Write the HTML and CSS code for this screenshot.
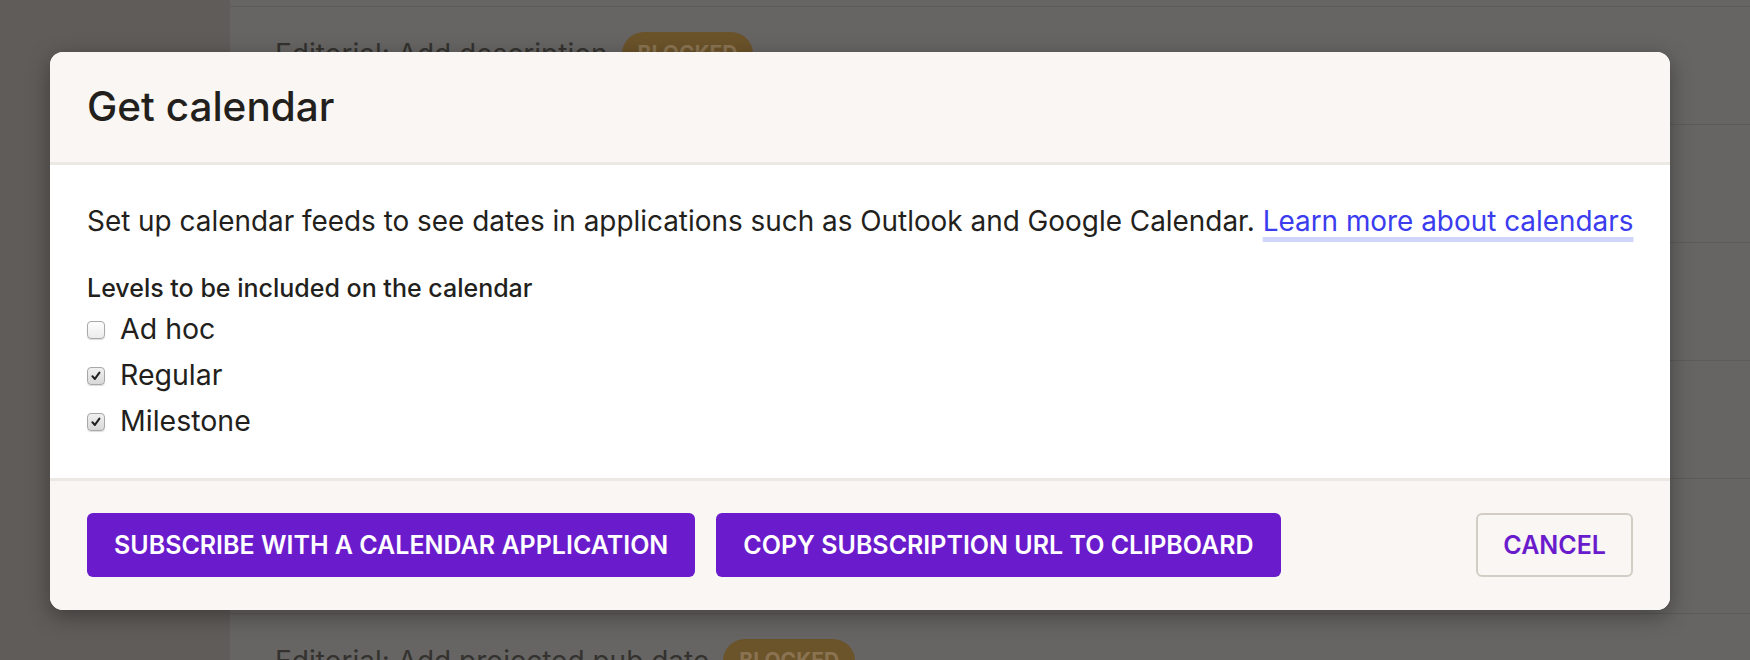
FILE: index.html
```html
<!DOCTYPE html>
<html lang="en">
<head>
  <meta charset="UTF-8">
  <title>Get calendar</title>
  <link rel="stylesheet" href="styles.css">
</head>
<body>

  <div class="app">
    <aside class="sidebar"></aside>
    <main class="main">
      <div class="list">
        <div class="task"></div>
        <div class="task">
          <span class="task-name">Editorial: Add description</span>
          <span class="badge">BLOCKED</span>
        </div>
        <div class="task"></div>
        <div class="task"></div>
        <div class="task"></div>
        <div class="task tall"></div>
        <div class="task">
          <span class="task-name">Editorial: Add projected pub date</span>
          <span class="badge">BLOCKED</span>
        </div>
      </div>
    </main>
  </div>

  <div class="modal">
    <div class="modal-header">
      <h1>Get calendar</h1>
    </div>

    <div class="modal-body">
      <p class="intro">Set up calendar feeds to see dates in applications such as Outlook and Google Calendar. <a href="#">Learn more about calendars</a></p>

      <div class="levels-title">Levels to be included on the calendar</div>

      <label class="check">
        <span class="box"></span>
        Ad hoc
      </label>
      <label class="check">
        <span class="box checked">
          <svg viewBox="0 0 18 18" width="18" height="18"><path d="M4.4 9.4 L7.6 12.8 L13.4 4.6" fill="none" stroke="#222" stroke-width="2.6" stroke-linecap="round" stroke-linejoin="round"/></svg>
        </span>
        Regular
      </label>
      <label class="check">
        <span class="box checked">
          <svg viewBox="0 0 18 18" width="18" height="18"><path d="M4.4 9.4 L7.6 12.8 L13.4 4.6" fill="none" stroke="#222" stroke-width="2.6" stroke-linecap="round" stroke-linejoin="round"/></svg>
        </span>
        Milestone
      </label>
    </div>

    <div class="modal-footer">
      <button class="btn primary">Subscribe with a calendar application</button>
      <button class="btn primary">Copy subscription URL to clipboard</button>
      <button class="btn cancel">Cancel</button>
    </div>
  </div>

</body>
</html>
```

FILE: styles.css
```css
* {
  box-sizing: border-box;
}
body {
  margin: 0;
  font-family: Inter, "Liberation Sans", sans-serif;
  color: #231f1c;
}

/* page behind the dialog, already dimmed */
.app {
  display: flex;
  height: 660px;
  overflow: hidden;
}
.sidebar {
  width: 230px;
  background: #5f5c59;
}
.main {
  flex: 1;
  background: #666563;
  overflow: hidden;
}
.list {
  margin-top: -111px;
}
.task {
  height: 118px;
  border-bottom: 1px solid #5c5b59;
  display: flex;
  align-items: flex-start;
  gap: 14px;
  padding: 25px 45px 0;
}
.task.tall {
  height: 135px;
}
.task-name {
  font-size: 28px;
  line-height: 44px;
  color: #34322f;
}
.badge {
  height: 44px;
  line-height: 44px;
  padding: 0 16px;
  border-radius: 22px;
  background: #6b532a;
  color: #8a7352;
  font-size: 21px;
  font-weight: 700;
}

/* dialog */
.modal {
  position: absolute;
  top: 52px;
  left: 50px;
  width: 1620px;
  background: #fff;
  border-radius: 13px;
  overflow: hidden;
  box-shadow: 0 6px 22px rgba(0, 0, 0, 0.35);
}
.modal-header {
  height: 113px;
  padding: 0 37px;
  display: flex;
  align-items: center;
  background: #f9f6f3;
  border-bottom: 3px solid #ece8e4;
}
.modal-header h1 {
  margin: 0;
  font-size: 40.5px;
  font-weight: 500;
  line-height: 1;
}
.modal-body {
  padding: 36px 30px 35px 37px;
}
.intro {
  margin: 0;
  font-size: 27.9px;
  line-height: 40px;
  white-space: nowrap;
}
.intro a {
  color: #3c3cef;
  text-decoration: underline;
  text-decoration-color: #d0d6fb;
  text-decoration-thickness: 5px;
  text-underline-offset: 6px;
  text-decoration-skip-ink: none;
}
.levels-title {
  margin-top: 30px;
  font-size: 25px;
  line-height: 34px;
  font-weight: 500;
}
.check {
  display: flex;
  align-items: center;
  gap: 15px;
  height: 46px;
  font-size: 28.5px;
}
.box {
  width: 18px;
  height: 18px;
  margin-top: 3px;
  border: 1px solid #a8a8a8;
  border-radius: 4px;
  background: linear-gradient(#fefefe, #ececec);
  box-shadow: 0 1px 1px rgba(0, 0, 0, 0.14);
  display: flex;
  align-items: center;
  justify-content: center;
}
.box.checked {
  background: linear-gradient(#f0f0f0, #d8d8d8);
}
.box svg {
  width: 14px;
  height: 14px;
}
.modal-footer {
  display: flex;
  gap: 21px;
  padding: 32px 37px 33px;
  background: #f9f6f3;
  border-top: 3px solid #ece8e4;
}
.btn {
  height: 64px;
  padding: 0 27px;
  border-radius: 6px;
  font-family: Inter, "Liberation Sans", sans-serif;
  font-size: 25px;
  font-weight: 600;
  text-transform: uppercase;
  cursor: pointer;
}
.btn.primary {
  background: #6a1bcc;
  border: none;
  color: #fff;
}
.btn.cancel {
  margin-left: auto;
  padding: 0 25px;
  background: #f9f6f3;
  border: 2px solid #d3cdc5;
  color: #6a1bcc;
}
```
